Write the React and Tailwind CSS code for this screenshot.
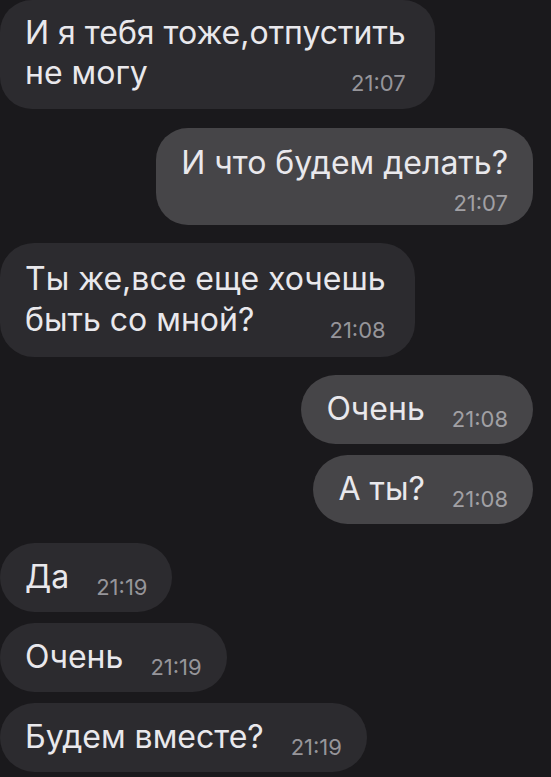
import React from "react";

const inBg = "bg-[#2c2b2f]";
const outBg = "bg-[#464548]";

function Time({ children, out }) {
  return (
    <span
      className={`text-[22px] leading-[20px] whitespace-nowrap ${
        out ? "text-[#a1a0a4]" : "text-[#96959a]"
      }`}
    >
      {children}
    </span>
  );
}

function Single({ text, time, out, className = "" }) {
  return (
    <div
      className={`flex items-end gap-[27px] rounded-full pl-[25px] pr-[25px] pt-[14px] pb-[15px] ${
        out ? outBg + " self-end mr-[18px]" : inBg + " self-start"
      } ${className}`}
    >
      <span className="text-[32px] leading-[40px] text-[#e9e8ec] whitespace-nowrap">{text}</span>
      <Time out={out}>{time}</Time>
    </div>
  );
}

export default function App() {
  return (
    <div className="w-[551px] h-[777px] overflow-hidden bg-[#1a191c] flex flex-col font-['Inter',sans-serif]">
      {/* 1 */}
      <div className={`self-start ${inBg} rounded-[32px] pl-[25px] pr-[29px] pt-[13px] pb-[16px]`}>
        <div className="text-[32px] leading-[40px] text-[#e9e8ec] whitespace-nowrap">И я тебя тоже,отпустить</div>
        <div className="flex items-end justify-between">
          <span className="text-[32px] leading-[40px] text-[#e9e8ec] whitespace-nowrap">не могу</span>
          <Time>21:07</Time>
        </div>
      </div>

      {/* 2 */}
      <div className={`self-end mr-[18px] mt-[19px] ${outBg} rounded-[32px] pl-[25px] pr-[25px] pt-[15px] pb-[12px] flex flex-col items-end`}>
        <div className="text-[32px] leading-[40px] text-[#e9e8ec] whitespace-nowrap">И что будем делать?</div>
        <div className="mt-[10px] flex">
          <Time out>21:07</Time>
        </div>
      </div>

      {/* 3 */}
      <div className={`self-start mt-[18px] ${inBg} rounded-[34px] pl-[25px] pr-[29px] pt-[15px] pb-[17px]`}>
        <div className="text-[32px] leading-[41px] text-[#e9e8ec] whitespace-nowrap">Ты же,все еще хочешь</div>
        <div className="flex items-end justify-between">
          <span className="text-[32px] leading-[41px] text-[#e9e8ec] whitespace-nowrap">быть со мной?</span>
          <Time>21:08</Time>
        </div>
      </div>

      <Single out text="Очень" time="21:08" className="mt-[18px]" />
      <Single out text="А ты?" time="21:08" className="mt-[11px]" />
      <Single text="Да" time="21:19" className="mt-[19px]" />
      <Single text="Очень" time="21:19" className="mt-[11px]" />
      <Single text="Будем вместе?" time="21:19" className="mt-[11px]" />
    </div>
  );
}
